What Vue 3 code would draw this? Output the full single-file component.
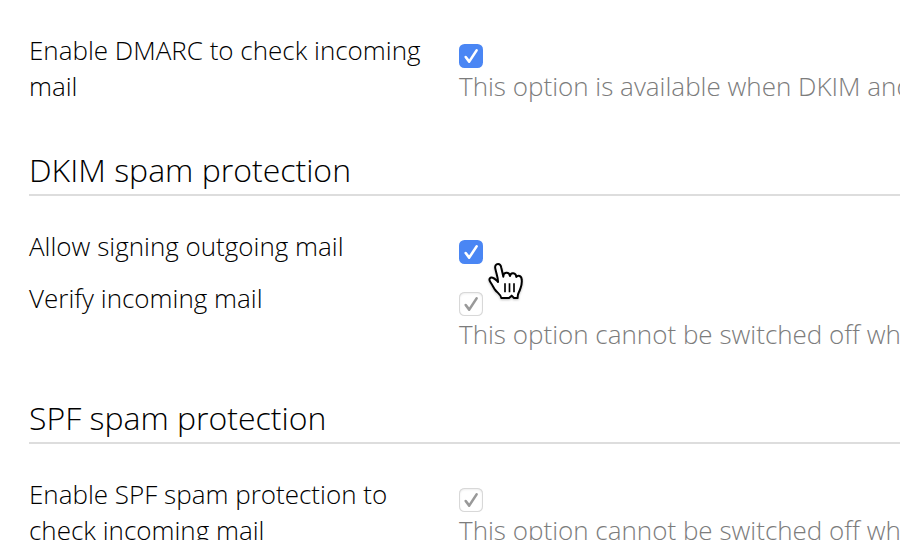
<template>
  <div class="page">
    <section v-for="section in sections" :key="section.id" class="section">
      <h2 v-if="section.title" class="title">{{ section.title }}</h2>
      <div class="rows">
        <div v-for="row in section.rows" :key="row.label" class="row">
          <div class="label">{{ row.label }}</div>
          <div class="field">
            <button
              class="checkbox"
              :class="{ disabled: row.disabled }"
              role="checkbox"
              :aria-checked="row.checked"
              :aria-label="row.label"
              :disabled="row.disabled"
              @click="row.checked = !row.checked"
            >
              <svg v-if="row.checked" class="check" viewBox="0 0 24 24">
                <path d="M6.7 13 10.2 17.6 17.6 6.4" />
              </svg>
            </button>
            <div v-if="row.hint" class="hint">{{ row.hint }}</div>
          </div>
        </div>
      </div>
    </section>

    <!-- Hand pointer -->
    <svg class="pointer" viewBox="144 111 108 117">
      <path
        class="hand"
        d="M184 219 C183 208 171 203 165 194 C160 186 157 180 151 171 C145 162 150 156 158 158 C165 160 168 165 174 171 C175 161 169 146 166 131 C164 122 168 117 174 117 C181 117 183 122 184 129 L190 155 C189 141 207 139 210 153 C212 141 228 142 229 156 C234 149 245 152 245 164 C247 178 243 185 240 194 C237 203 232 205 233 219 L222 219 L215 212 L207 219 Z"
      />
      <path class="lines" d="M195 175V202M208.5 175V202M222 175V202" />
    </svg>
  </div>
</template>

<script setup>
import { ref } from "vue";

const sections = ref([
  {
    id: "dmarc",
    rows: [
      {
        label: "Enable DMARC to check incoming mail",
        checked: true,
        hint: "This option is available when DKIM and SPF are enabled",
      },
    ],
  },
  {
    id: "dkim",
    title: "DKIM spam protection",
    rows: [
      { label: "Allow signing outgoing mail", checked: true },
      {
        label: "Verify incoming mail",
        checked: true,
        disabled: true,
        hint: "This option cannot be switched off when DMARC is enabled",
      },
    ],
  },
  {
    id: "spf",
    title: "SPF spam protection",
    rows: [
      {
        label: "Enable SPF spam protection to check incoming mail",
        checked: true,
        disabled: true,
        hint: "This option cannot be switched off when DMARC is enabled",
      },
    ],
  },
]);
</script>

<style>
body {
  margin: 0;
  background: #fff;
}
</style>

<style scoped>
.page {
  position: relative;
  box-sizing: border-box;
  height: 540px;
  padding: 32px 0 0 29px;
  overflow: hidden;
  color: #000;
  font-family: "Open Sans", sans-serif;
  font-size: 26px;
  font-weight: 300;
  line-height: 36px;
}

.title {
  margin: 44px 0 32px;
  padding-bottom: 2px;
  border-bottom: 2px solid #ddd;
  font-size: 32px;
  font-weight: 300;
  line-height: 44px;
}

.rows {
  display: grid;
  gap: 16px;
}

.row {
  display: grid;
  grid-template-columns: 400px 1fr;
  column-gap: 30px;
}

.field {
  min-width: 0;
  padding-top: 12px;
}

.checkbox {
  display: block;
  box-sizing: border-box;
  width: 24px;
  height: 24px;
  padding: 0;
  border: 0;
  border-radius: 5.5px;
  background: #4a86f4;
  color: #fff;
}

.checkbox.disabled {
  background: #fff;
  box-shadow: inset 0 0 0 1px #d8d8d8, inset 0 1px 3px #ddd;
  color: #999;
}

.check {
  display: block;
  width: 24px;
  height: 24px;
}

.check path {
  fill: none;
  stroke: currentColor;
  stroke-width: 2.6;
  stroke-linecap: round;
  stroke-linejoin: round;
}

.hint {
  color: #7c7c7c;
  white-space: nowrap;
}

.pointer {
  position: absolute;
  top: 262px;
  left: 488px;
  width: 36px;
  height: 39px;
  filter: drop-shadow(0 1px 1px rgba(0, 0, 0, 0.25));
}

.hand {
  fill: #fff;
  stroke: #000;
  stroke-width: 6;
  stroke-linejoin: round;
}

.lines {
  fill: none;
  stroke: #000;
  stroke-width: 5;
}
</style>
